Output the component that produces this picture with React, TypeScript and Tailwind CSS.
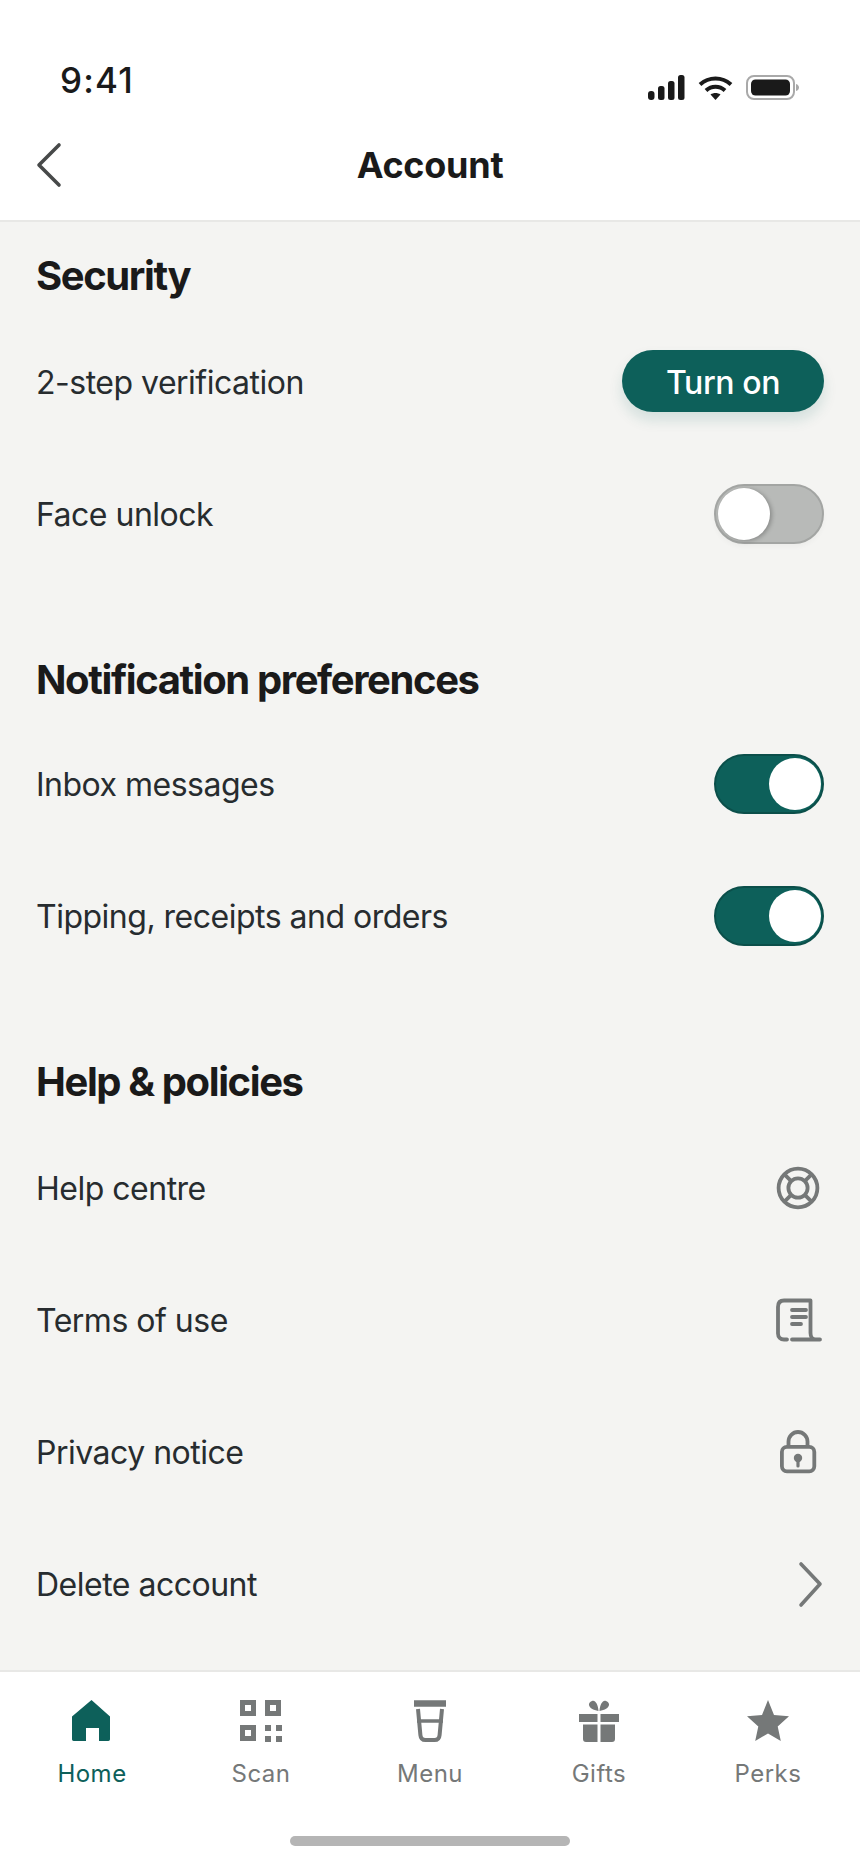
const FONT = "font-['Inter','Liberation_Sans',sans-serif]";

function Toggle({ on }: { on: boolean }) {
  return on ? (
    <div className="flex h-[60px] w-[110px] items-center justify-end rounded-full border-2 border-[#0b4f4a] bg-[#0d605a] pr-[1px]">
      <div className="h-[52px] w-[52px] rounded-full bg-white" />
    </div>
  ) : (
    <div className="flex h-[60px] w-[110px] items-center justify-start rounded-full border-2 border-[#a3a5a3] bg-[#b8bab8] pl-[2px] shadow-[0_3px_5px_rgba(0,0,0,0.03)]">
      <div className="h-[52px] w-[52px] rounded-full bg-white shadow-[2px_1px_4px_rgba(0,0,0,0.25)]" />
    </div>
  );
}

function Row({ label, children }: { label: string; children: React.ReactNode }) {
  return (
    <div className="flex h-[132px] items-center justify-between pl-[36px] pr-[36px]">
      <span className="relative top-[1px] text-[32px] font-normal leading-[40px] tracking-[-0.5px] text-[#272c2f]">{label}</span>
      {children}
    </div>
  );
}

function Heading({ children, className }: { children: React.ReactNode; className: string }) {
  return (
    <h2 className={`pl-[36px] text-[40px] font-bold leading-[48px] tracking-[-1.4px] text-[#1a1a1a] ${className}`}>
      {children}
    </h2>
  );
}

const G = "#757878";
const T = "#0d605a";

function Lifebuoy() {
  return (
    <svg width="48" height="48" viewBox="0 0 48 48" fill="none" stroke={G} strokeWidth="3.800">
      <circle cx="22" cy="24" r="19.400" />
      <circle cx="22" cy="24" r="9.600" />
      <path d="M8.200 10.200l7 7M35.800 10.200l-7 7M8.200 37.800l7-7M35.800 37.800l-7-7" />
    </svg>
  );
}

function Receipt() {
  return (
    <svg width="48" height="48" viewBox="0 0 48 48" fill="none" stroke={G} strokeWidth="3.800" strokeLinecap="round" strokeLinejoin="round">
      <path d="M11 43.500H8c-3.500 0-6-2.500-6-6V11c0-4.500 2.500-6.500 6-6.500h26.500V37c0 4 2 6.500 5 6.500h4.500M16 43.500h23" />
      <path d="M16 14h14M16 21h14M16 28h9" />
    </svg>
  );
}

function Lock() {
  return (
    <svg width="48" height="48" viewBox="0 0 48 48" fill="none">
      <path d="M12.500 19v-5.500a9.500 9.500 0 0 1 19 0V19" stroke={G} strokeWidth="3.800" />
      <rect x="5.900" y="18.900" width="32.400" height="24.400" rx="5" stroke={G} strokeWidth="3.800" />
      <circle cx="22" cy="30" r="4.200" fill={G} />
      <path d="M22 30v8" stroke={G} strokeWidth="3.200" strokeLinecap="round" />
    </svg>
  );
}

function ChevronRight() {
  return (
    <svg width="48" height="48" viewBox="0 0 48 48" fill="none" stroke={G} strokeWidth="3.600" strokeLinecap="round" strokeLinejoin="round">
      <path d="M25 4l19 20-19 21" />
    </svg>
  );
}

function NavItem({ label, active, children }: { label: string; active?: boolean; children: React.ReactNode }) {
  return (
    <div className="flex flex-col items-center">
      <div className="flex h-[44px] w-[44px] items-center justify-center">{children}</div>
      <span className={`mt-[16px] text-[24px] leading-[30px] tracking-[0.5px] ${active ? "text-[#0d605a]" : "text-[#757878]"}`}>
        {label}
      </span>
    </div>
  );
}

export default function App() {
  return (
    <div className={`flex h-[1864px] w-[860px] flex-col overflow-hidden bg-[#f4f4f2] ${FONT}`}>
      <header className="h-[222px] shrink-0 border-b-2 border-[#e8e8e6] bg-white">
        <div className="flex h-[134px] items-start justify-between pl-[60px] pr-[61px] pt-[58px]">
          <span className="text-[35px] font-medium leading-[44px] tracking-[1.2px] text-[#1a1a1a]">9:41</span>
          <div className="mt-[17px] flex items-center gap-[13px]">
            <svg width="37" height="25" viewBox="0 0 37 25" fill="#1a1a1a">
              <rect x="0" y="16" width="6.500" height="9" rx="3" />
              <rect x="10" y="11" width="6.500" height="14" rx="2.500" />
              <rect x="20" y="6" width="6.500" height="19" rx="2.500" />
              <rect x="30" y="0" width="6.500" height="25" rx="2.500" />
            </svg>
            <svg width="35" height="24" viewBox="0 0 35 24" fill="none" stroke="#1a1a1a" strokeWidth="4">
              <path d="M2 8.500c9-8 22-8 31 0M8 14.500c5.500-5 13.500-5 19 0" />
              <path d="M12.500 18.500c3-2 7-2 10 0L17.500 24z" fill="#1a1a1a" stroke="none" />
            </svg>
            <svg width="53" height="25" viewBox="0 0 53 25">
              <rect x="1" y="1" width="47" height="23" rx="7" fill="none" stroke="#a9a9a9" strokeWidth="2" />
              <rect x="5" y="4.500" width="39" height="16" rx="4.500" fill="#1a1a1a" />
              <path d="M50 9c2 .5 3 2 3 3.500s-1 3-3 3.500z" fill="#a9a9a9" />
            </svg>
          </div>
        </div>
        <div className="relative flex h-[62px] items-center justify-center">
          <svg className="absolute left-[36px] top-[8px]" width="26" height="46" viewBox="0 0 26 46" fill="none" stroke="#474949" strokeWidth="3.600" strokeLinecap="round" strokeLinejoin="round">
            <path d="M23 3L3 23l20 20" />
          </svg>
          <h1 className="text-[36px] font-bold leading-[44px] tracking-[-0.25px] text-[#1a1a1a]">Account</h1>
        </div>
      </header>

      <main className="flex-1">
        <section>
          <Heading className="mb-[16px] pt-[30px]">Security</Heading>
          <Row label="2-step verification">
            <button className="relative top-[-1px] flex h-[62px] w-[202px] items-center justify-center rounded-full bg-[#0d605a] pt-[4px] text-[32px] font-medium tracking-[-0.4px] text-white shadow-[0_8px_14px_rgba(15,99,93,0.14)]">
              Turn on
            </button>
          </Row>
          <Row label="Face unlock">
            <Toggle on={false} />
          </Row>
        </section>
        <section>
          <Heading className="mb-[14px] pt-[76px]">Notification preferences</Heading>
          <Row label="Inbox messages">
            <Toggle on />
          </Row>
          <Row label="Tipping, receipts and orders">
            <Toggle on />
          </Row>
        </section>
        <section>
          <Heading className="mb-[16px] pt-[76px]">Help &amp; policies</Heading>
          <Row label="Help centre">
            <Lifebuoy />
          </Row>
          <Row label="Terms of use">
            <Receipt />
          </Row>
          <Row label="Privacy notice">
            <Lock />
          </Row>
          <Row label="Delete account">
            <ChevronRight />
          </Row>
        </section>
      </main>

      <nav className="relative h-[194px] shrink-0 border-t-2 border-[#e8e8e6] bg-white">
        <div className="grid grid-cols-5 px-[7.500px] pt-[27px]">
          <NavItem label="Home" active>
            <svg width="40" height="44" viewBox="0 0 40 44" fill={T}>
              <path d="M19.500 1L38 17.500v23a2 2 0 0 1-2 1.500h-9V29H14v13H2a2 2 0 0 1-2-1.500v-23z" />
            </svg>
          </NavItem>
          <NavItem label="Scan">
            <svg width="42" height="42" viewBox="0 0 42 42" fill="none" stroke={G}>
              <g strokeWidth="5">
                <rect x="2.500" y="2.500" width="11" height="11" />
                <rect x="27.500" y="2.500" width="11" height="11" />
                <rect x="2.500" y="27.500" width="11" height="11" />
              </g>
              <g fill={G} stroke="none">
                <rect x="25" y="25" width="6" height="6" />
                <rect x="36" y="25" width="6" height="6" />
                <rect x="25" y="36" width="6" height="6" />
                <rect x="36" y="36" width="6" height="6" />
              </g>
            </svg>
          </NavItem>
          <NavItem label="Menu">
            <svg width="32" height="42" viewBox="0 0 32 42" fill="none" stroke={G}>
              <path d="M0 3.500h32" strokeWidth="6.500" />
              <path d="M4 9l2.400 26c.3 3.500 2 5 5 5h9.200c3 0 4.700-1.500 5-5L28 9" strokeWidth="4" />
              <path d="M3 21h26" strokeWidth="3.500" />
            </svg>
          </NavItem>
          <NavItem label="Gifts">
            <svg width="40" height="42" viewBox="0 0 40 42" fill={G}>
              <path d="M13 1c3-1.500 6 3 6.500 10-5.500-1-9-3-9.500-6-.3-2 1.500-3.500 3-4zM27 1c-3-1.500-6 3-6.500 10 5.500-1 9-3 9.500-6 .3-2-1.500-3.500-3-4z" />
              <rect x="0" y="14" width="18.500" height="8" />
              <rect x="21.500" y="14" width="18.500" height="8" />
              <path d="M4 24.500h14.500V42H7a3 3 0 0 1-3-3zM21.500 24.500H36V39a3 3 0 0 1-3 3H21.500z" />
            </svg>
          </NavItem>
          <NavItem label="Perks">
            <svg width="42" height="42" viewBox="0 0 42 42" fill={G}>
              <path d="M21 0l6 15 15 1.300-11.300 10.200L33.800 41 21 33.500 8.200 41l3.100-14.500L0 16.300 15 15z" />
            </svg>
          </NavItem>
        </div>
        <div className="absolute bottom-[18px] left-[290px] h-[10px] w-[280px] rounded-full bg-[#b5b5b5]" />
      </nav>
    </div>
  );
}
